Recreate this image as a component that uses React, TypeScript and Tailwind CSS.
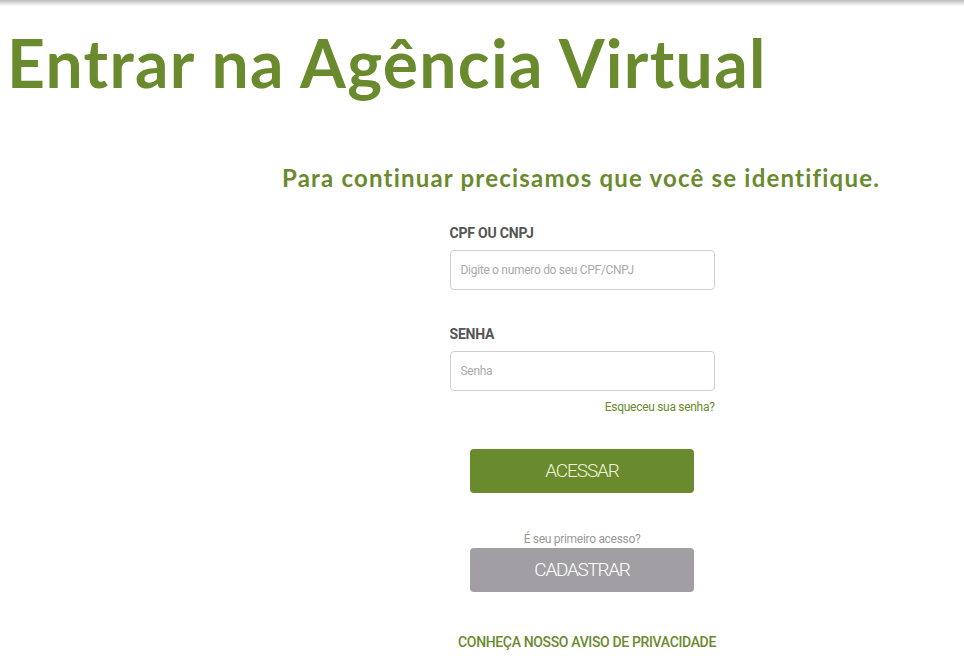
import React from "react";

export default function App() {
  const cond = { fontFamily: "Roboto, 'Liberation Sans', sans-serif" };
  return (
    <div className="min-h-[670px] w-[964px] bg-white relative">
      <div className="h-[6px] w-full bg-gradient-to-b from-[#bdbdbd] to-white" />
      <h1
        className="pl-[7px] pt-[17px] text-[66px] leading-[80px] font-bold text-[#6a8a2e] tracking-[1.3px] whitespace-nowrap"
        style={{ fontFamily: "Lato, sans-serif" }}
      >
        Entrar na Agência Virtual
      </h1>
      <div className="ml-[282px] w-[600px] flex flex-col items-center">
        <h2
          className="mt-[60px] w-full text-[24px] leading-[30px] font-bold text-[#6a8a2e] tracking-[1.2px] whitespace-nowrap"
          style={{ fontFamily: "Lato, sans-serif" }}
        >
          Para continuar precisamos que você se identifique.
        </h2>
        <div className="w-[265px] mt-[32px] flex flex-col" style={cond}>
          <label className="text-[14px] leading-[16px] font-bold text-[#555] tracking-[-0.2px]">CPF OU CNPJ</label>
          <input
            className="mt-[9px] h-[40px] w-full border border-[#cfcfcf] rounded-[4px] px-[10px] text-[12px] placeholder:text-[#aaa] tracking-[-0.3px] outline-none"
            placeholder="Digite o numero do seu CPF/CNPJ"
          />
          <label className="mt-[36px] text-[14px] leading-[16px] font-bold text-[#555] tracking-[-0.2px]">SENHA</label>
          <input
            className="mt-[9px] h-[40px] w-full border border-[#cfcfcf] rounded-[4px] px-[10px] text-[12px] placeholder:text-[#aaa] tracking-[-0.3px] outline-none"
            placeholder="Senha"
            type="password"
          />
          <a className="mt-[8px] self-end text-[12px] leading-[16px] text-[#6a8a2e] tracking-[-0.3px]">Esqueceu sua senha?</a>
          <button className="mt-[34px] self-center w-[224px] h-[44px] rounded-[4px] bg-[#6a8a2e] text-[#eef5dc] text-[19px] font-light tracking-[-1.1px]">
            ACESSAR
          </button>
          <p className="mt-[38px] text-center text-[12px] leading-[16px] text-[#999] tracking-[-0.3px]">É seu primeiro acesso?</p>
          <button className="mt-[1px] self-center w-[224px] h-[44px] rounded-[4px] bg-[#a19fa3] text-white text-[19px] font-light tracking-[-1.3px]">
            CADASTRAR
          </button>
          <a className="mt-[42px] ml-[10px] self-center text-[14px] leading-[16px] font-medium text-[#6a8a2e] tracking-[-0.35px] whitespace-nowrap">
            CONHEÇA NOSSO AVISO DE PRIVACIDADE
          </a>
        </div>
      </div>
    </div>
  );
}
